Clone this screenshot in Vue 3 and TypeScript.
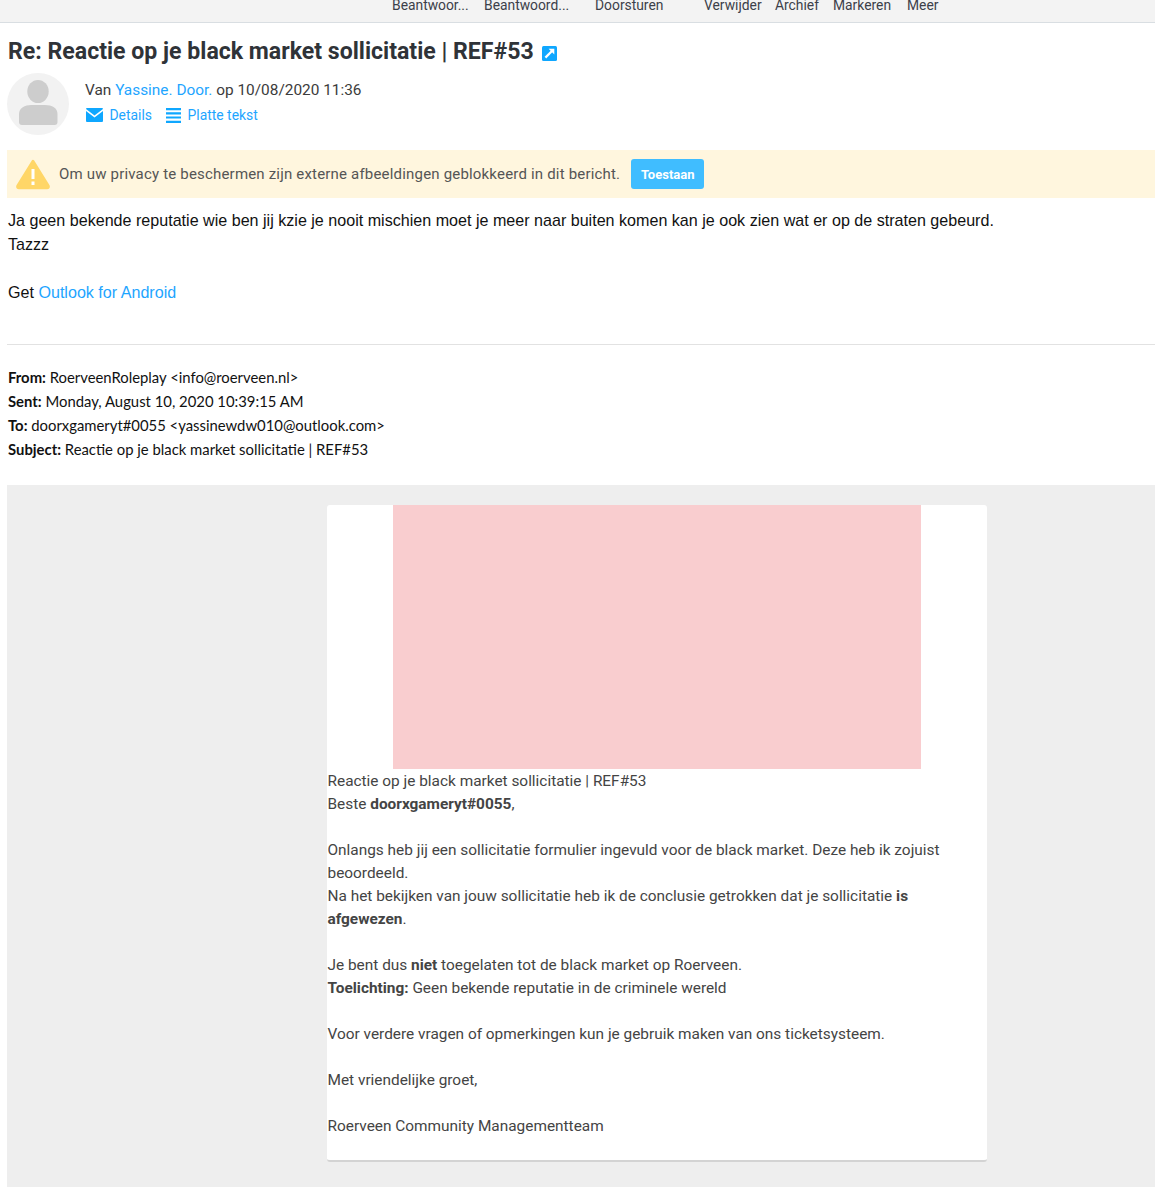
<script setup lang="ts">
const toolbar = [
  { label: 'Beantwoor...', width: 92 },
  { label: 'Beantwoord...', width: 111 },
  { label: 'Doorsturen', width: 109 },
  { label: 'Verwijder', width: 71 },
  { label: 'Archief', width: 58 },
  { label: 'Markeren', width: 74 },
  { label: 'Meer', width: 40 },
]

const forwardHeaders = [
  { key: 'From:', value: 'RoerveenRoleplay <info@roerveen.nl>' },
  { key: 'Sent:', value: 'Monday, August 10, 2020 10:39:15 AM' },
  { key: 'To:', value: 'doorxgameryt#0055 <yassinewdw010@outlook.com>' },
  { key: 'Subject:', value: 'Reactie op je black market sollicitatie | REF#53' },
]
</script>

<template>
  <div class="page">
    <div class="toolbar">
      <span
        v-for="item in toolbar"
        :key="item.label"
        class="tool"
        :style="{ width: `${item.width}px` }"
      >{{ item.label }}</span>
    </div>

    <div class="message">
      <h1 class="subject">
        Re: Reactie op je black market sollicitatie | REF#53
        <svg class="popout" viewBox="0 0 15 15" width="15" height="15">
          <rect width="15" height="15" rx="1.5" fill="#0fa7ff" />
          <path d="M3.4 11.6 L10 5" fill="none" stroke="#fff" stroke-width="2.2" />
          <path d="M6.6 2.7 H12.3 V8.4 Z" fill="#fff" />
        </svg>
      </h1>

      <div class="sender">
        <div class="avatar">
          <svg viewBox="0 0 62 62" width="62" height="62">
            <ellipse cx="31" cy="18.5" rx="10.7" ry="11.5" fill="#cdcdcd" />
            <path d="M12 49 V41 C12 35 18 32 24 32 H38 C45 32 50.500 35 50.500 41 V49 Q50.500 52 47.500 52 H15 Q12 52 12 49 Z" fill="#cdcdcd" />
          </svg>
        </div>
        <div class="sender-info">
          <div class="from-line">Van <a class="link">Yassine. Door.</a> op 10/08/2020 11:36</div>
          <div class="actions">
            <a class="link action">
              <svg viewBox="0 0 17 14" width="17" height="14">
                <path d="M1 0 H16 Q17 0 17 1 V1 L8.500 7.500 L0 1 V1 Q0 0 1 0 Z" fill="#0fa7ff" />
                <path d="M0 3 L8.500 9.500 L17 3 V13 Q17 14 16 14 H1 Q0 14 0 13 Z" fill="#0fa7ff" />
              </svg>
              Details
            </a>
            <a class="link action">
              <svg viewBox="0 0 15 15" width="15" height="15">
                <path d="M0 1.100 H15 M0 5.300 H15 M0 9.500 H15 M0 13.800 H15" stroke="#0fa7ff" stroke-width="2.200" />
              </svg>
              Platte tekst
            </a>
          </div>
        </div>
      </div>

      <div class="privacy">
        <svg viewBox="0 0 34 31" width="34" height="31" class="warn">
          <path d="M17 2 L32.500 27 Q33 29 31 29 H3 Q1 29 1.500 27 Z" fill="#ffd667" stroke="#ffd667" stroke-width="2.500" stroke-linejoin="round" />
          <path d="M17 10 V20 M17 22.500 V26" stroke="#fff" stroke-width="3" />
        </svg>
        <span class="privacy-text">Om uw privacy te beschermen zijn externe afbeeldingen geblokkeerd in dit bericht.</span>
        <button class="allow">Toestaan</button>
      </div>

      <div class="reply">
        <div>Ja geen bekende reputatie wie ben jij kzie je nooit mischien moet je meer naar buiten komen kan je ook zien wat er op de straten gebeurd.</div>
        <div>Tazzz</div>
        <div class="spacer"></div>
        <div>Get <a class="link">Outlook for Android</a></div>
      </div>

      <hr class="divider" />

      <div class="forward">
        <div v-for="row in forwardHeaders" :key="row.key">
          <b>{{ row.key }}</b> {{ row.value }}
        </div>
      </div>

      <div class="mail-bg">
        <div class="card">
          <div class="banner"></div>
          <div class="card-text">
            <p>Reactie op je black market sollicitatie | REF#53</p>
            <p>Beste <b>doorxgameryt#0055</b>,</p>
            <p class="blank"></p>
            <p>Onlangs heb jij een sollicitatie formulier ingevuld voor de black market. Deze heb ik zojuist beoordeeld.</p>
            <p>Na het bekijken van jouw sollicitatie heb ik de conclusie getrokken dat je sollicitatie <b>is afgewezen</b>.</p>
            <p class="blank"></p>
            <p>Je bent dus <b>niet</b> toegelaten tot de black market op Roerveen.</p>
            <p><b>Toelichting:</b> Geen bekende reputatie in de criminele wereld</p>
            <p class="blank"></p>
            <p>Voor verdere vragen of opmerkingen kun je gebruik maken van ons ticketsysteem.</p>
            <p class="blank"></p>
            <p>Met vriendelijke groet,</p>
            <p class="blank"></p>
            <p>Roerveen Community Managementteam</p>
          </div>
        </div>
      </div>
    </div>
  </div>
</template>

<style>
html,
body {
  margin: 0;
  background: #fff;
}
</style>

<style scoped>
.page {
  height: 1187px;
  overflow: hidden;
  font-family: Roboto, "Liberation Sans", sans-serif;
  color: #333;
}

.toolbar {
  height: 22px;
  display: flex;
  padding-left: 392px;
  background: #f3f3f3;
  border-bottom: 1px solid #d9dee2;
  overflow: hidden;
}

.tool {
  flex-shrink: 0;
  margin-top: -5px;
  font-size: 13.85px;
  line-height: 20px;
  color: #3c3f4a;
  white-space: nowrap;
}

.message {
  padding-left: 7px;
}

.subject {
  margin: 0;
  padding: 13px 0 0 1px;
  font-size: 23.1px;
  line-height: 32px;
  font-weight: 700;
  color: #2f3338;
  white-space: nowrap;
}

.popout {
  margin-left: 3px;
  vertical-align: -2px;
}

.sender {
  display: flex;
  margin-top: 5px;
  height: 77px;
}

.avatar {
  width: 62px;
  height: 62px;
  border-radius: 50%;
  background: #f2f2f2;
  overflow: hidden;
}

.sender-info {
  margin-left: 16px;
  padding-top: 7px;
}

.from-line {
  font-size: 15.4px;
  line-height: 20px;
  color: #3c3c3c;
}

.link {
  color: #1ea5ff;
}

.actions {
  display: flex;
  gap: 14px;
  margin-top: 5px;
  margin-left: 1px;
}

.action {
  display: flex;
  align-items: center;
  gap: 6.5px;
  font-size: 13.9px;
  line-height: 20px;
}

.privacy {
  display: flex;
  align-items: center;
  height: 48px;
  background: #fff6de;
  padding-left: 9px;
}

.warn {
  flex-shrink: 0;
}

.privacy-text {
  margin-left: 9px;
  font-size: 15px;
  color: #555;
  letter-spacing: 0.185px;
  white-space: nowrap;
}

.allow {
  margin-left: 11px;
  width: 73px;
  height: 30px;
  padding: 0;
  border: 0;
  border-radius: 3px;
  background: #40bdff;
  color: #fff;
  font-family: Roboto, sans-serif;
  font-size: 13px;
  font-weight: 700;
}

.reply {
  margin-top: 10px;
  padding-left: 1px;
  font-family: "Liberation Sans", Arial, sans-serif;
  font-size: 16.1px;
  line-height: 24px;
  color: #111;
}

.spacer {
  height: 24px;
}

.divider {
  margin: 40px 0 0;
  border: 0;
  border-top: 1px solid #e2e2e2;
}

.forward {
  margin-top: 20px;
  padding-left: 1px;
  font-family: Lato, "Open Sans", sans-serif;
  font-size: 14.85px;
  line-height: 24px;
  color: #111;
}

.mail-bg {
  margin-top: 24px;
  padding: 20px 0 26px;
  background: #eee;
}

.card {
  width: 660px;
  height: 655px;
  margin-left: 320px;
  background: #fff;
  border-radius: 3px;
  border-bottom: 2px solid #d3d3d3;
}

.banner {
  width: 528px;
  height: 264px;
  margin: 0 auto;
  background: #f9cdcf;
}

.card-text {
  padding: 1px 39px 0 0.5px;
  font-size: 15.4px;
  line-height: 23px;
  color: #444;
}

.card-text p {
  margin: 0;
}

.blank {
  height: 23px;
}
</style>
